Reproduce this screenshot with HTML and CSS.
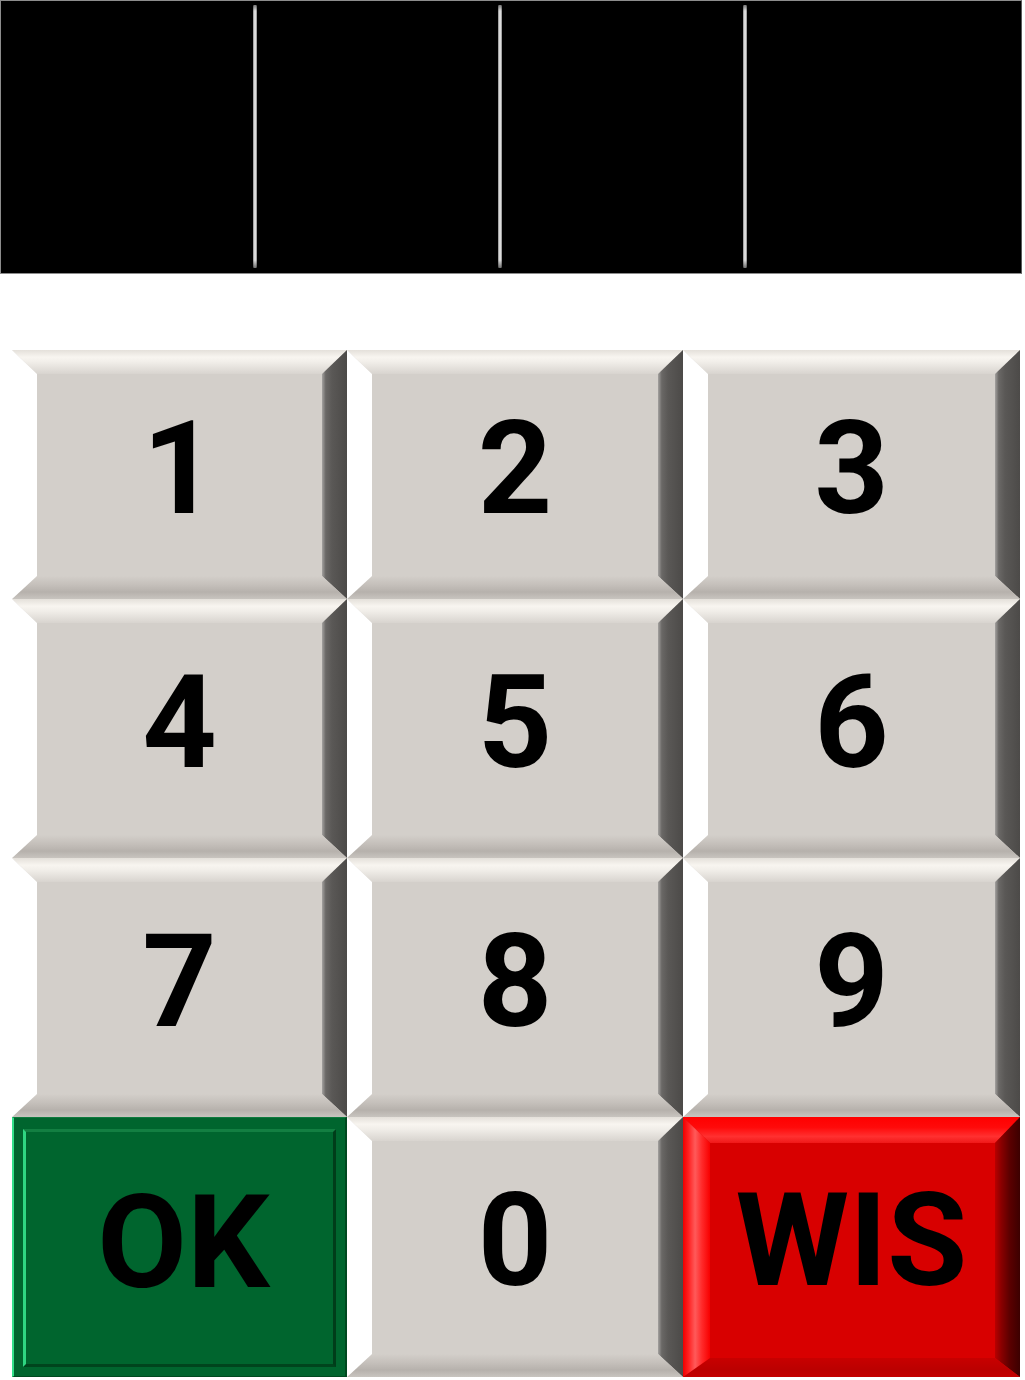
FILE: index.html
```html
<!DOCTYPE html>
<html lang="nl">
<head>
<meta charset="utf-8">
<title>Keypad</title>
<link rel="stylesheet" href="styles.css">
</head>
<body>
<div class="display">
  <div class="cell"></div>
  <div class="sep"></div>
  <div class="cell"></div>
  <div class="sep"></div>
  <div class="cell"></div>
  <div class="sep"></div>
  <div class="cell"></div>
</div>

<div class="pad">
  <div class="key gray"><span class="bv t"></span><span class="bv r"></span><span class="bv b"></span><span class="bv l"></span><span class="lbl">1</span></div>
  <div class="key gray"><span class="bv t"></span><span class="bv r"></span><span class="bv b"></span><span class="bv l"></span><span class="lbl">2</span></div>
  <div class="key gray"><span class="bv t"></span><span class="bv r"></span><span class="bv b"></span><span class="bv l"></span><span class="lbl">3</span></div>
  <div class="key gray"><span class="bv t"></span><span class="bv r"></span><span class="bv b"></span><span class="bv l"></span><span class="lbl">4</span></div>
  <div class="key gray"><span class="bv t"></span><span class="bv r"></span><span class="bv b"></span><span class="bv l"></span><span class="lbl">5</span></div>
  <div class="key gray"><span class="bv t"></span><span class="bv r"></span><span class="bv b"></span><span class="bv l"></span><span class="lbl">6</span></div>
  <div class="key gray"><span class="bv t"></span><span class="bv r"></span><span class="bv b"></span><span class="bv l"></span><span class="lbl">7</span></div>
  <div class="key gray"><span class="bv t"></span><span class="bv r"></span><span class="bv b"></span><span class="bv l"></span><span class="lbl">8</span></div>
  <div class="key gray"><span class="bv t"></span><span class="bv r"></span><span class="bv b"></span><span class="bv l"></span><span class="lbl">9</span></div>
  <div class="key ok"><div class="ok-inner"><span class="lbl">OK</span></div></div>
  <div class="key gray"><span class="bv t"></span><span class="bv r"></span><span class="bv b"></span><span class="bv l"></span><span class="lbl">0</span></div>
  <div class="key red"><span class="bv t"></span><span class="bv r"></span><span class="bv b"></span><span class="bv l"></span><span class="lbl">WIS</span></div>
</div>
</body>
</html>
```

FILE: styles.css
```css
html, body {
  margin: 0;
  padding: 0;
  background: #ffffff;
}

body {
  width: 1025px;
  height: 1380px;
  overflow: hidden;
  font-family: Roboto, "DejaVu Sans Condensed", sans-serif;
}

/* ---------- display ---------- */
.display {
  box-sizing: border-box;
  width: 1022px;
  height: 274px;
  background: #000;
  border: 1px solid #8c8c8c;
  border-right-color: #5a5a5a;
  display: grid;
  grid-template-columns: 252px 4px 241px 4px 241px 4px 1fr;
  padding: 4px 0 5px 0;
}

.sep {
  border-radius: 1px;
  background:
    linear-gradient(to bottom, rgba(0,0,0,0.45) 0, rgba(0,0,0,0) 6px, rgba(0,0,0,0) calc(100% - 8px), rgba(0,0,0,0.5) 100%),
    linear-gradient(to right, #8a8a8a 0, #e8e8e8 45%, #d8d8d8 70%, #7a7a7a 100%);
}

/* ---------- keypad ---------- */
.pad {
  margin: 76px 0 0 12px;
  width: 1008px;
  display: grid;
  grid-template-columns: 335px 336px 337px;
  grid-template-rows: 249px 259px 259px 260px;
}

.key {
  position: relative;
  display: flex;
  align-items: center;
  justify-content: center;
  --T: 24px;
  --R: 25px;
  --B: 23px;
  --L: 25px;
}

.lbl {
  position: relative;
  font-weight: 700;
  font-size: 130px;
  line-height: 1;
  padding-bottom: 12px;
  color: #000;
}

.bv {
  position: absolute;
  display: block;
}

.bv.t {
  top: 0; left: 0; right: 0;
  height: var(--T);
  clip-path: polygon(0 0, 100% 0, calc(100% - var(--R)) 100%, var(--L) 100%);
}
.bv.b {
  bottom: 0; left: 0; right: 0;
  height: var(--B);
  clip-path: polygon(var(--L) 0, calc(100% - var(--R)) 0, 100% 100%, 0 100%);
}
.bv.l {
  top: 0; bottom: 0; left: 0;
  width: var(--L);
  clip-path: polygon(0 0, 100% var(--T), 100% calc(100% - var(--B)), 0 100%);
}
.bv.r {
  top: 0; bottom: 0; right: 0;
  width: var(--R);
  clip-path: polygon(100% 0, 100% 100%, 0 calc(100% - var(--B)), 0 var(--T));
}

/* gray keys */
.gray { background: #d3cfca; }
.gray .bv.t {
  background: linear-gradient(to bottom, #e4e0da 0, #f8f5f0 30%, #f1eee9 50%, #d8d4cf 100%);
}
.gray .bv.b {
  background: linear-gradient(to bottom, #d3cfca 0, #c4bfba 40%, #b6b1ac 70%, #c8c4bf 100%);
}
.gray .bv.l {
  background: #ffffff;
}
.gray .bv.r {
  background: linear-gradient(to right, #a4a2a0 0, #6a6866 15%, #5a5856 40%, #4c4a48 100%);
}

/* OK key */
.ok {
  box-sizing: border-box;
  background: #00652e;
  border-top: 1px solid #0f7a3e;
  border-left: 2px solid #33e08a;
  border-right: 2px solid #00481f;
  border-bottom: 1px solid #004a20;
  padding: 11px 9px 9px 9px;
  align-items: stretch;
}

.ok-inner {
  flex: 1;
  box-sizing: border-box;
  display: flex;
  align-items: center;
  justify-content: center;
  background: #00652e;
  border-top: 3px solid #137f42;
  border-left: 3px solid #2fd682;
  border-right: 3px solid #003d1a;
  border-bottom: 3px solid #00441d;
}

.ok .lbl {
  margin-left: 8px;
  padding-bottom: 10px;
}

/* red key */
.red {
  background: #d80000;
  --T: 26px;
  --R: 25px;
  --B: 19px;
  --L: 27px;
}
.red .bv.t {
  background: linear-gradient(to bottom, #ff0000 0, #ff0a0a 40%, #ff3030 75%, #f01818 100%);
}
.red .bv.b {
  background: linear-gradient(to bottom, #c80000 0, #bb0000 60%, #c40000 100%);
}
.red .bv.l {
  background: linear-gradient(to right, #f00000 0, #ff2020 20%, #ff5a5a 45%, #ff2a2a 70%, #f80000 100%);
}
.red .bv.r {
  background: linear-gradient(to right, #b80000 0, #8a0000 25%, #5a0000 60%, #3c0000 100%);
}
```
